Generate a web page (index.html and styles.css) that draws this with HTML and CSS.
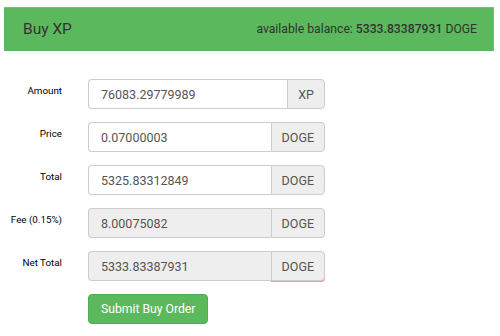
FILE: index.html
```html
<!DOCTYPE html>
<html lang="en">
<head>
    <meta charset="UTF-8">
    <meta name="viewport" content="width=device-width, initial-scale=1.0">
    <title>Buy XP</title>
    <link rel="stylesheet" href="styles.css">
</head>
<body>
    <div class="panel">
        <div class="panel-heading">
            <h3 class="panel-title">Buy XP</h3>
            <div class="balance">available balance: <b>5333.83387931</b> DOGE</div>
        </div>
        <form class="order-form">
            <div class="form-row">
                <label class="control-label" for="amount">Amount</label>
                <div class="input-group">
                    <input type="text" id="amount" class="form-control" value="76083.29779989">
                    <span class="addon">XP</span>
                </div>
            </div>
            <div class="form-row">
                <label class="control-label" for="price">Price</label>
                <div class="input-group">
                    <input type="text" id="price" class="form-control" value="0.07000003">
                    <span class="addon">DOGE</span>
                </div>
            </div>
            <div class="form-row">
                <label class="control-label" for="total">Total</label>
                <div class="input-group">
                    <input type="text" id="total" class="form-control" value="5325.83312849">
                    <span class="addon">DOGE</span>
                </div>
            </div>
            <div class="form-row">
                <label class="control-label" for="fee">Fee (0.15%)</label>
                <div class="input-group">
                    <input type="text" id="fee" class="form-control" value="8.00075082" readonly>
                    <span class="addon">DOGE</span>
                </div>
            </div>
            <div class="form-row">
                <label class="control-label" for="net">Net Total</label>
                <div class="input-group">
                    <input type="text" id="net" class="form-control" value="5333.83387931" readonly>
                    <span class="addon addon-warn">DOGE</span>
                </div>
            </div>
            <div class="form-row">
                <span></span>
                <div><button type="button" class="btn-success">Submit Buy Order</button></div>
            </div>
        </form>
    </div>
</body>
</html>
```

FILE: styles.css
```css
body {
    margin: 0;
    font-family: Roboto, "Liberation Sans", sans-serif;
    color: #333;
    background: #fff;
}
.panel {
    padding: 7px 6px 0 4px;
}
.panel-heading {
    display: flex;
    justify-content: space-between;
    align-items: center;
    height: 44px;
    box-sizing: border-box;
    padding: 0 16px 0 18px;
    background-color: #5cb85c;
    border: 1px solid #72c472;
    border-bottom-color: #5cb85c;
    border-left-color: #5cb85c;
}
.panel-title {
    margin: 0;
    font-size: 15.5px;
    font-weight: normal;
}
.balance {
    font-size: 12.2px;
}
.balance b {
    font-weight: 500;
}
.order-form {
    margin-top: 28px;
}
.form-row {
    display: grid;
    grid-template-columns: 58px 237px;
    column-gap: 26px;
    margin-bottom: 13px;
}
.control-label {
    text-align: right;
    white-space: nowrap;
    font-size: 9.8px;
    font-weight: normal;
    padding-top: 6px;
    color: #000;
}
.input-group {
    display: flex;
    height: 30px;
}
.form-control {
    flex: 1;
    min-width: 0;
    height: 30px;
    box-sizing: border-box;
    padding: 0 12px;
    border: 1px solid #ccc;
    border-right: none;
    border-radius: 4px 0 0 4px;
    font-family: inherit;
    font-size: 12.5px;
    color: #555;
    background-color: #fff;
}
.form-control[readonly] {
    background-color: #eee;
}
.addon {
    display: flex;
    align-items: center;
    padding: 0 10px;
    border: 1px solid #ccc;
    border-radius: 0 4px 4px 0;
    background-color: #eee;
    font-size: 12.5px;
    color: #555;
}
.addon-warn {
    box-shadow: 0 1px 0 #d9a3a3;
}
.btn-success {
    height: 30px;
    padding: 0 12px;
    border: 1px solid #4cae4c;
    border-radius: 4px;
    background-color: #5cb85c;
    color: #fff;
    font-family: inherit;
    font-size: 12.2px;
    cursor: pointer;
}
```
